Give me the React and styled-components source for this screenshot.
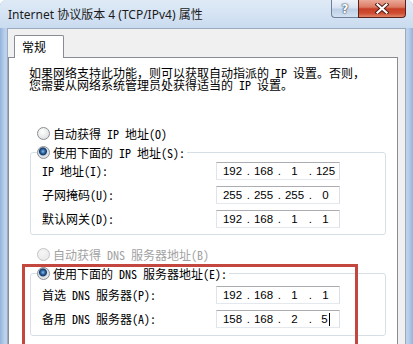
import React from "react";
import styled, { createGlobalStyle } from "styled-components";

const Global = createGlobalStyle`
  html, body { margin: 0; padding: 0; background: #ffffff; }
  * { box-sizing: border-box; }
`;

const CJK = `"Noto Sans CJK SC", "Noto Sans", sans-serif`;

const Window = styled.div`
  width: 413px;
  height: 344px;
  overflow: hidden;
  display: flex;
  flex-direction: column;
  border-radius: 6px 6px 0 0;
  background: linear-gradient(90deg, #93b3dc 0, #bcd2ec 5px, #cddff2 50%, #bcd2ec calc(100% - 5px), #93b3dc 100%);
`;

const TitleBar = styled.div`
  height: 28px;
  flex: none;
  display: flex;
  align-items: flex-start;
  padding-left: 8px;
  background: linear-gradient(180deg, #dfeaf6 0, #d3e2f3 60%, #c9dbef 100%);
`;

const Title = styled.div`
  margin-top: 6px;
  font: 12px/18px "Noto Sans", "Noto Sans CJK SC", sans-serif;
  color: #1b1b1b;
  white-space: nowrap;
`;

const Caption = styled.div`
  margin-left: auto;
  margin-right: 7px;
  display: flex;
`;

const HelpBtn = styled.div`
  width: 27px;
  height: 18px;
  border: 1px solid #6f809a;
  border-top: none;
  border-right: none;
  border-radius: 0 0 0 4px;
  background: linear-gradient(180deg, #eef3fa 0, #d7e3f1 48%, #bccfe6 52%, #d3e1f1 100%);
  display: flex;
  align-items: center;
  justify-content: center;
  font: bold 12px/1 "DejaVu Sans", sans-serif;
  color: #ffffff;
  text-shadow: 0 0 1px #3d4b60, 0 0 1px #3d4b60, 0 0 2px #3d4b60;
`;

const CloseBtn = styled.div`
  width: 48px;
  height: 18px;
  border: 1px solid #5e2119;
  border-top: none;
  border-radius: 0 0 4px 0;
  background: linear-gradient(180deg, #eaa898 0, #dc7b64 42%, #c63f26 52%, #cf4d32 78%, #e0866a 100%);
  display: flex;
  align-items: center;
  justify-content: center;
`;

const Client = styled.div`
  flex: 1;
  margin: 0 7px;
  background: #f0f0f0;
  border: 1px solid #9aabc0;
  border-bottom: none;
  padding: 6px 7px 0 0;
  display: flex;
  flex-direction: column;
`;

const TabStrip = styled.div`
  display: flex;
  height: 22px;
  flex: none;
`;

const Tab = styled.div`
  margin-left: 6px;
  width: 50px;
  height: 23px;
  padding-left: 7px;
  background: #ffffff;
  border: 1px solid #898c95;
  border-bottom: none;
  border-radius: 2px 2px 0 0;
  font: 12px/22px ${CJK};
  color: #000;
  position: relative;
  z-index: 1;
`;

const Panel = styled.div`
  flex: 1;
  position: relative;
  background: #ffffff;
  border: 1px solid #898c95;
  border-bottom: none;
  display: flex;
  flex-direction: column;
  font: 12px ${CJK};
  font-feature-settings: "hwid";
  color: #000;
`;

const Intro = styled.p`
  margin: 9px 0 0 20px;
  line-height: 12px;
  white-space: nowrap;
  font-feature-settings: normal;
`;

const Latin = styled.span`
  font-feature-settings: "hwid";
`;

const RadioRow = styled.div`
  display: flex;
  align-items: center;
  gap: 3px;
  height: 16px;
  margin: ${(p) => p.$top}px 0 0 28px;
  color: ${(p) => (p.$disabled ? "#a2a2a2" : "#000")};
  white-space: nowrap;
`;

const RadioDot = styled.span`
  width: 13px;
  height: 13px;
  flex: none;
  border-radius: 50%;
  border: 1px solid ${(p) => (p.$disabled ? "#c4c4c4" : "#8a8d92")};
  background: ${(p) =>
    p.$checked
      ? "radial-gradient(circle at 45% 40%, #8fb9e4 0, #2f6aa8 2px, #12386a 3.5px, #d9dde3 4.5px, #f4f4f4 100%)"
      : p.$disabled
      ? "radial-gradient(circle at 40% 35%, #f6f6f6 0, #e6e6e6 100%)"
      : "radial-gradient(circle at 40% 35%, #ffffff 0, #d6d8db 100%)"};
`;

const Group = styled.fieldset`
  margin: 3px 0 0 21px;
  width: 356px;
  padding: 0;
  min-inline-size: 0;
  border: 1px solid #d5dfe5;
  border-radius: 3px;
`;

const Legend = styled.legend`
  margin-left: 6px;
  padding: 0 2px 0 0;
  height: 16px;
  display: flex;
  align-items: center;
  gap: 3px;
  white-space: nowrap;
`;

const Rows = styled.div`
  display: grid;
  grid-template-columns: 174px 124px;
  row-gap: 6px;
  align-items: center;
  padding: ${(p) => p.$pt}px 0 ${(p) => p.$pb}px 11px;
`;

const Label = styled.span`
  line-height: 18px;
  white-space: nowrap;
`;

const IpBox = styled.div`
  width: 124px;
  height: 18px;
  border: 1px solid;
  border-color: #abadb3 #dbdfe6 #e3e9ef #e2e3ea;
  display: flex;
  align-items: center;
  padding-left: 2px;
  font: 11.5px/16px "Liberation Sans", Arial, sans-serif;
  color: #000;
`;

const Octet = styled.span`
  flex: 1;
  display: flex;
  justify-content: center;
  align-items: center;
`;

const Dot = styled.span`
  width: 4px;
  flex: none;
  text-align: right;
`;

const Caret = styled.span`
  display: inline-block;
  width: 1px;
  height: 13px;
  margin-left: 1px;
  background: #000;
`;

const Highlight = styled.div`
  position: absolute;
  left: 13px;
  top: 206px;
  width: 336px;
  height: 130px;
  border: 3px solid #c4473f;
  pointer-events: none;
`;

function Ip({ value, caret }) {
  const parts = value.split(".");
  return (
    <IpBox>
      {parts.map((p, i) => (
        <React.Fragment key={i}>
          {i > 0 && <Dot>.</Dot>}
          <Octet>
            {p}
            {caret && i === parts.length - 1 && <Caret />}
          </Octet>
        </React.Fragment>
      ))}
    </IpBox>
  );
}

export default function App() {
  return (
    <>
      <Global />
      <Window>
        <TitleBar>
          <Title>Internet 协议版本 4 (TCP/IPv4) 属性</Title>
          <Caption>
            <HelpBtn>?</HelpBtn>
            <CloseBtn>
              <svg width="14" height="11" viewBox="0 0 14 11">
                <path d="M2.5 1.5 L11.5 9.5 M11.5 1.5 L2.5 9.5" stroke="#4a1a14" strokeWidth="4" strokeLinecap="square" />
                <path d="M2.5 1.5 L11.5 9.5 M11.5 1.5 L2.5 9.5" stroke="#ffffff" strokeWidth="2.2" strokeLinecap="square" />
              </svg>
            </CloseBtn>
          </Caption>
        </TitleBar>
        <Client>
          <TabStrip>
            <Tab>常规</Tab>
          </TabStrip>
          <Panel>
            <Intro>
              如果网络支持此功能，则可以获取自动指派的<Latin> IP </Latin>设置。否则，
              <br />
              您需要从网络系统管理员处获得适当的<Latin> IP </Latin>设置。
            </Intro>
            <RadioRow $top={34}>
              <RadioDot />
              自动获得 IP 地址(O)
            </RadioRow>
            <Group>
              <Legend>
                <RadioDot $checked />
                使用下面的 IP 地址(S):
              </Legend>
              <Rows $pt={2} $pb={6}>
                <Label>IP 地址(I):</Label>
                <Ip value="192.168.1.125" />
                <Label>子网掩码(U):</Label>
                <Ip value="255.255.255.0" />
                <Label>默认网关(D):</Label>
                <Ip value="192.168.1.1" />
              </Rows>
            </Group>
            <RadioRow $top={11} $disabled>
              <RadioDot $disabled />
              自动获得 DNS 服务器地址(B)
            </RadioRow>
            <Group>
              <Legend>
                <RadioDot $checked />
                使用下面的 DNS 服务器地址(E):
              </Legend>
              <Rows $pt={5} $pb={7}>
                <Label>首选 DNS 服务器(P):</Label>
                <Ip value="192.168.1.1" />
                <Label>备用 DNS 服务器(A):</Label>
                <Ip value="158.168.2.5" caret />
              </Rows>
            </Group>
            <Highlight />
          </Panel>
        </Client>
      </Window>
    </>
  );
}
